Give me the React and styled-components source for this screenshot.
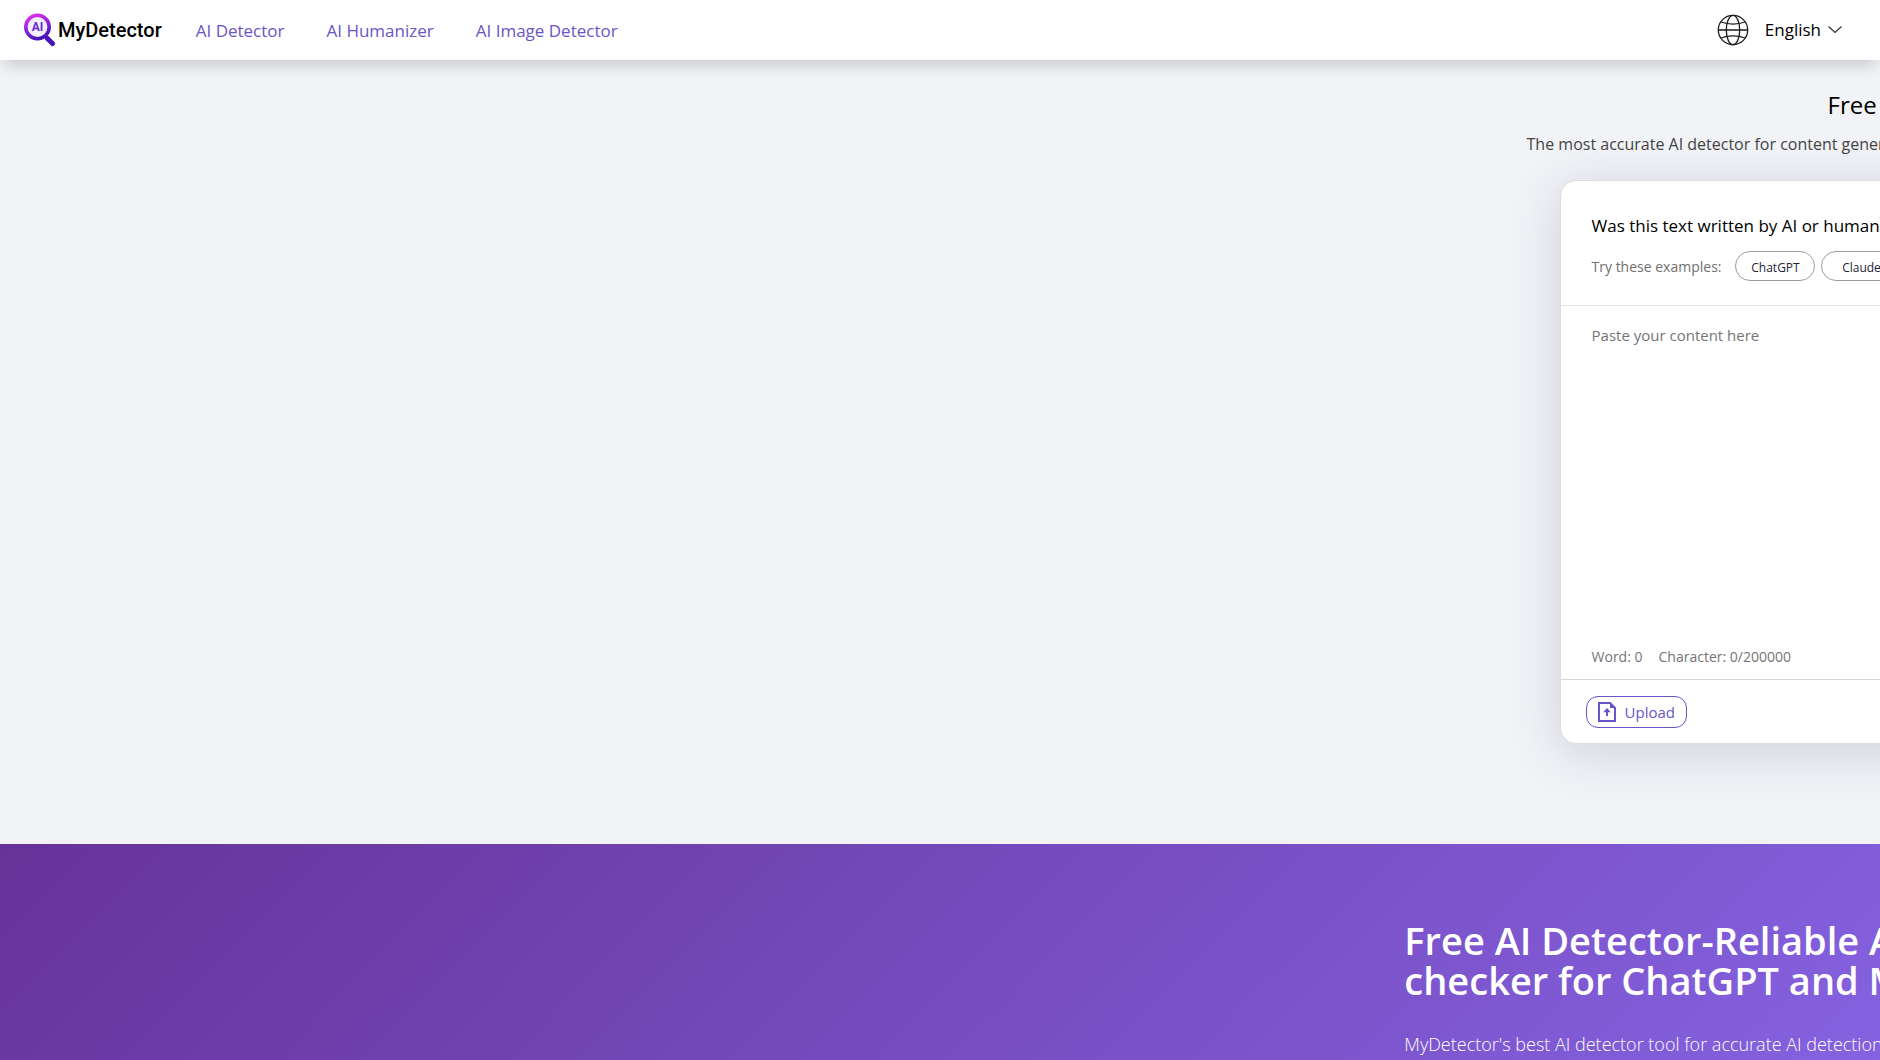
import React from 'react';
import styled, { createGlobalStyle } from 'styled-components';

const sans = "'Trebuchet MS', 'Open Sans', sans-serif";
const purple = '#6a55c8';

const GlobalStyle = createGlobalStyle`
  * {
    box-sizing: border-box;
  }
  body {
    margin: 0;
    background: #f1f3f7;
    font-family: ${sans};
  }
  h1, h2, p {
    margin: 0;
  }
`;

const Page = styled.div`
  min-height: 100vh;
  display: flex;
  flex-direction: column;
  overflow: hidden;
`;

const NavbarStyle = styled.header`
  display: flex;
  align-items: center;
  justify-content: space-between;
  height: 60px;
  padding: 0 38px 0 23px;
  background: #fff;
  box-shadow: 0 10px 15px -5px rgba(0, 0, 0, 0.18);
`;

const NavGroup = styled.nav`
  display: flex;
  align-items: center;
  gap: 42px;
`;

const Brand = styled.a`
  display: flex;
  align-items: center;
  gap: 3px;
  margin-right: -8px;
  color: #000;
  font: 500 20px/32px Roboto, sans-serif;
  text-decoration: none;
`;

const NavLink = styled.a`
  padding-top: 2px;
  color: ${purple};
  font-size: 17px;
  line-height: 24px;
  text-decoration: none;
`;

const LanguageButton = styled.button`
  display: flex;
  align-items: center;
  gap: 7px;
  padding: 0;
  border: 0;
  background: none;
  color: #000;
  font: 500 17px/24px ${sans};

  svg:first-child {
    margin-right: 9px;
  }
`;

const Hero = styled.main`
  flex: none;
  width: 200%;
  padding: 27px 0 100px 81.2%;
`;

const Title = styled.h1`
  margin-left: 301px;
  font-size: 24px;
  font-weight: 400;
  line-height: 36px;
`;

const Subtitle = styled.p`
  margin-top: 9px;
  color: #444;
  font-size: 16px;
  line-height: 24px;
`;

const Card = styled.section`
  width: 900px;
  margin: 24px 0 0 33px;
  border: 1px solid #dcdce2;
  border-radius: 16px;
  background: #fff;
  box-shadow: 0 8px 50px rgba(40, 40, 80, 0.17);
`;

const CardHead = styled.div`
  padding: 33px 31px 24px;
  border-bottom: 1px solid #e0e2e4;
`;

const Question = styled.h2`
  font-size: 17px;
  font-weight: 400;
  line-height: 24px;
`;

const Examples = styled.div`
  display: flex;
  align-items: center;
  gap: 6px;
  margin-top: 13px;
  color: #707070;
  font-size: 14px;
`;

const ExamplesLabel = styled.span`
  margin-right: 8px;
`;

const ExampleButton = styled.button`
  width: 80px;
  height: 30px;
  padding: 3px 0 0;
  border: 1px solid #9a9ca3;
  border-radius: 15px;
  background: #fff;
  color: #1d2433;
  font: 400 12px/20px ${sans};
`;

const TextBox = styled.textarea`
  display: block;
  width: 100%;
  height: 333px;
  padding: 17px 31px;
  border: 0;
  background: none;
  resize: none;
  font: 400 15px/24px ${sans};

  &::placeholder {
    color: #757575;
  }
`;

const Counts = styled.div`
  display: flex;
  gap: 16px;
  padding: 6px 31px 10px;
  border-bottom: 1px solid #d3d6d8;
  color: #757575;
  font-size: 14px;
  line-height: 24px;
`;

const CardFoot = styled.div`
  padding: 16px 25px 15px;
`;

const UploadButton = styled.button`
  display: flex;
  align-items: center;
  gap: 9px;
  height: 32px;
  padding: 0 11px;
  border: 1px solid ${purple};
  border-radius: 12px;
  background: #fff;
  color: ${purple};
  font: 400 15px/24px ${sans};
`;

const Banner = styled.section`
  flex: 1;
  width: 200%;
  padding: 76px 0 0 74.7%;
  background: linear-gradient(135deg, #663399 0%, #8968ea 60%);
  color: #fff;
  white-space: nowrap;
`;

const BannerTitle = styled.h2`
  font-size: 38px;
  font-weight: 600;
  line-height: 40px;
`;

const BannerText = styled.p`
  margin-top: 32px;
  font-size: 18px;
  font-weight: 300;
  line-height: 24px;
`;

function Logo() {
  return (
    <svg width="32" height="36" viewBox="0 0 32 36" aria-hidden="true">
      <defs>
        <linearGradient id="ring" x1="0.2" y1="0" x2="0.6" y2="1">
          <stop offset="0" stopColor="#e22ff0" />
          <stop offset="0.5" stopColor="#8a25d8" />
          <stop offset="1" stopColor="#4a14b8" />
        </linearGradient>
      </defs>
      <path d="M22 24l2.500 2.500" stroke="#4a14b8" strokeWidth="3" />
      <path d="M24.500 26.500l5 5" stroke="#4a14b8" strokeWidth="5" strokeLinecap="round" />
      <circle cx="14.500" cy="15" r="11.700" fill="#f4efff" stroke="url(#ring)" strokeWidth="3.600" />
      <text x="14.500" y="19" textAnchor="middle" fontFamily="Roboto" fontWeight="700" fontSize="12" fill="#6a2bd0">
        AI
      </text>
    </svg>
  );
}

function Globe() {
  return (
    <svg width="32" height="32" viewBox="0 0 32 32" fill="none" stroke="#1c1c1c" strokeWidth="1.3" aria-hidden="true">
      <circle cx="16" cy="16" r="14.7" />
      <ellipse cx="16" cy="16" rx="6.7" ry="14.7" />
      <path d="M1.3 16h29.4M4 8c7 2.800 17 2.800 24 0M4 24c7-2.800 17-2.800 24 0" />
    </svg>
  );
}

function Chevron() {
  return (
    <svg width="14" height="8" viewBox="0 0 14 8" fill="none" stroke="#333" strokeWidth="1.2" aria-hidden="true">
      <path d="M0.500 0.500l6.500 6 6.500-6" />
    </svg>
  );
}

function UploadIcon() {
  return (
    <svg width="18" height="20" viewBox="0 0 18 20" fill="none" stroke={purple} strokeWidth="2" aria-hidden="true">
      <path d="M1 1h11l5 5v13H1z" />
      <path d="M12 0v6h6z" fill={purple} stroke="none" />
      <path d="M9 14V8" />
      <path d="M5.200 10.300L9 6l3.800 4.300z" fill={purple} stroke="none" />
    </svg>
  );
}

const links = ['AI Detector', 'AI Humanizer', 'AI Image Detector'];
const examples = ['ChatGPT', 'Claude'];

export default function App() {
  return (
    <Page>
      <GlobalStyle />
      <NavbarStyle>
        <NavGroup>
          <Brand href="#">
            <Logo />
            MyDetector
          </Brand>
          {links.map((link) => (
            <NavLink href="#" key={link}>
              {link}
            </NavLink>
          ))}
        </NavGroup>
        <LanguageButton type="button">
          <Globe />
          English
          <Chevron />
        </LanguageButton>
      </NavbarStyle>
      <Hero>
        <Title>Free AI Detector</Title>
        <Subtitle>The most accurate AI detector for content generated by AI</Subtitle>
        <Card>
          <CardHead>
            <Question>Was this text written by AI or human?</Question>
            <Examples>
              <ExamplesLabel>Try these examples:</ExamplesLabel>
              {examples.map((example) => (
                <ExampleButton type="button" key={example}>
                  {example}
                </ExampleButton>
              ))}
            </Examples>
          </CardHead>
          <TextBox aria-label="Content" placeholder="Paste your content here" />
          <Counts>
            <span>Word: 0</span>
            <span>Character: 0/200000</span>
          </Counts>
          <CardFoot>
            <UploadButton type="button">
              <UploadIcon />
              Upload
            </UploadButton>
          </CardFoot>
        </Card>
      </Hero>
      <Banner>
        <BannerTitle>
          Free AI Detector-Reliable AI
          <br />
          checker for ChatGPT and More
        </BannerTitle>
        <BannerText>MyDetector's best AI detector tool for accurate AI detection</BannerText>
      </Banner>
    </Page>
  );
}
